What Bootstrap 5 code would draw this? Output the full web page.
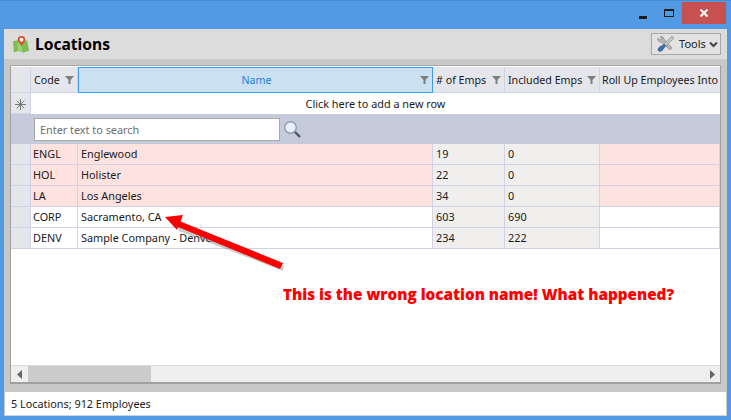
<!DOCTYPE html>
<html lang="en">
<head>
<meta charset="utf-8">
<title>Locations</title>
<link rel="stylesheet" href="https://cdn.jsdelivr.net/npm/bootstrap@5.3.0/dist/css/bootstrap.min.css">
<style>
html,body{height:420px;overflow:hidden}
body{background:#539ae4;font-family:"Noto Sans","Open Sans","Liberation Sans",sans-serif;font-size:10.85px;color:#1a1a1a;position:relative;border-top:1px solid #4a8cd0}
.titlebar{height:28px}
.winbtn{width:26px;height:22px;margin-top:1px}
.winclose{width:44px;background:#c75050;margin-right:5px}
.shell{height:387px;margin:0 4px 4px 4px;background:#c8c8c8}
.headbar{height:30px;background:#dcdcdc;padding:0 6px 0 8px}
.apptitle{font-size:15.6px;font-weight:700;color:#000;margin:0;line-height:20px}
.toolsbtn{width:70px;height:22px;border:1px solid #a8a8a8;background:#e2e2e2;border-radius:0;padding:0 2px 0 4px;font-size:11px;color:#222}
.gridwrap{flex:1 1 auto;min-height:0;padding:6px 6px 8px 6px;background:#c8c8c8}
.gridframe{height:100%;border:1px solid #a0a0a0;border-bottom-width:2px;border-top-color:#a8a8a8;background:#fff;padding-top:1px}
.gridbody{flex:1 1 auto;min-height:0;overflow:hidden}
.loctable{table-layout:fixed;width:709px;border-collapse:separate;border-spacing:0;margin:0}
.loctable td,.loctable th{height:21px;padding:0 0 0 3px;font-weight:400;border-right:1px solid #cfd3e4;border-bottom:1px solid #cfd3e4;white-space:nowrap;overflow:hidden;line-height:20px;vertical-align:middle}
.loctable thead th{height:26px;background:#e4e6ec;padding-left:3px;border-bottom-color:#d2d6e4;font-size:10.7px}
.loctable thead th .hd{display:flex;align-items:center;justify-content:space-between;padding-right:3px}
.loctable thead th.sel{background:#c9e1f1;border:1px solid #3f9bee;color:#1f7fdc;padding-left:0}
.loctable thead th.sel .hd span{flex:1;text-align:center;padding-left:14px}
.loctable thead th.last{padding-left:2px;border-right:0}
.indic{background:#e4e6ec!important;padding:0!important;text-align:center}
.newrow td{height:21px;background:#fff;border-right:0;border-bottom:0;text-align:center;padding:0}
.newrow td.indic{border-right:1px solid #cfd3e4;border-bottom:1px solid #cfd3e4}
.searchstrip td{height:30px;background:#c5cbdb;border:0;padding:0 0 0 23px}
.searchstrip td .searchin{width:246px;height:23px;border:1px solid #a8a8a8;background:#fff;padding:0 0 0 5px;color:#6d6d6d;line-height:21px;display:inline-block}
.searchstrip .srow{display:flex;align-items:center;gap:3px}
.warnrow td{background:#fde2df}
.loctable tbody td.calc{background:#f0efee}
.loctable tbody tr.datarow td:first-child{background:#e4e6ec}
.loctable tbody tr.datarow td:nth-child(2){padding-left:2px}
.filler{background:#fff}
.hscroll{height:17px;background:#eeeeee;border-top:1px solid #dadada}
.hscroll .arrowcell{width:17px}
.hthumb{width:123px;background:#cbcbcb}
.statusline{height:24px;background:#fff;margin:0 1px 0 1px;padding-left:6px;line-height:23px;border-bottom:1px solid #c8d4e4}
.overlay{position:absolute;left:0;top:-1px;width:731px;height:420px;pointer-events:none}
.callout{position:absolute;left:283px;top:284px;font-family:"Open Sans","Noto Sans",sans-serif;font-weight:800;font-size:15.25px;line-height:18px;color:#fe0000;white-space:nowrap}
</style>
</head>
<body>
<div class="titlebar d-flex justify-content-end align-items-start">
  <div class="winbtn d-flex align-items-center justify-content-center"><svg width="10" height="12" viewBox="0 0 10 12"><rect x="1" y="9" width="8" height="3" fill="#1c1c1c"/></svg></div>
  <div class="winbtn d-flex align-items-center justify-content-center"><svg width="12" height="10" viewBox="0 0 12 10"><rect x="1.5" y="1.5" width="9" height="7" fill="none" stroke="#1c1c1c"/><rect x="1" y="1" width="10" height="2" fill="#1c1c1c"/></svg></div>
  <div class="winbtn winclose d-flex align-items-center justify-content-center"><svg width="10" height="10" viewBox="0 0 10 10"><path d="M1.5 1.5l7 7M8.5 1.5l-7 7" stroke="#fff" stroke-width="2"/></svg></div>
</div>
<div class="shell d-flex flex-column">
  <div class="headbar d-flex align-items-center justify-content-between">
    <div class="d-flex align-items-center gap-1">
      <svg width="19" height="20" viewBox="0 0 20 20" class="flex-shrink-0"><path d="M1 7l5-1 4 2 6-2 2 11-6 2-5-2-5 2z" fill="#7fbd52"/><path d="M6 6l4 2 1 11-5-2z" fill="#9bd16e"/><path d="M13 8a4 4 0 1 0-8 .01C5 10.500 8 12 9 15c1-3 4-4.500 4-7z" transform="translate(1 -2.500)" fill="#d9512c"/><circle cx="10" cy="5.500" r="2" fill="#fff"/></svg>
      <h1 class="apptitle">Locations</h1>
    </div>
    <button type="button" class="toolsbtn d-flex align-items-center justify-content-between">
      <svg width="20" height="18" viewBox="0 0 20 18"><path d="M4 2c2-1 4 0 4 2l8 9-2 2-9-8C3 7 1 6 2 3l2 2 2-1z" fill="#b4b4b4" stroke="#777" stroke-width=".5"/><path d="M16 1l2 2-8 8-2-2z" fill="#c4c4c4" stroke="#777" stroke-width=".5"/><path d="M8 9l2 2-4 5c-1 1-3 1-4 0s0-3 1-4z" fill="#3d6ba8"/></svg>
      <span>Tools</span>
      <svg width="9" height="7" viewBox="0 0 9 7"><path d="M1 1.500l3.500 3.500L8 1.500" fill="none" stroke="#444" stroke-width="2"/></svg>
    </button>
  </div>
  <div class="gridwrap d-flex flex-column">
    <div class="gridframe d-flex flex-column">
      <div class="gridbody filler">
        <table class="loctable">
          <colgroup><col style="width:20px"><col style="width:47px"><col style="width:355px"><col style="width:72px"><col style="width:95px"><col style="width:120px"></colgroup>
          <thead>
            <tr>
              <th class="indic"></th>
              <th><div class="hd"><span>Code</span><svg width="9" height="8" viewBox="0 0 9 8"><path d="M0 0h9L5.500 4v4h-2V4z" fill="#7d7d7d"/></svg></div></th>
              <th class="sel"><div class="hd"><span>Name</span><svg width="9" height="8" viewBox="0 0 9 8"><path d="M0 0h9L5.500 4v4h-2V4z" fill="#7d7d7d"/></svg></div></th>
              <th><div class="hd"><span># of Emps</span><svg width="9" height="8" viewBox="0 0 9 8"><path d="M0 0h9L5.500 4v4h-2V4z" fill="#7d7d7d"/></svg></div></th>
              <th><div class="hd"><span>Included Emps</span><svg width="9" height="8" viewBox="0 0 9 8"><path d="M0 0h9L5.500 4v4h-2V4z" fill="#7d7d7d"/></svg></div></th>
              <th class="last">Roll Up Employees Into</th>
            </tr>
          </thead>
          <tbody>
            <tr class="newrow"><td class="indic"><svg width="11" height="11" viewBox="0 0 11 11"><path d="M5.500 0v11M0 5.500h11M1.700 1.700l7.600 7.600M9.300 1.700l-7.600 7.600" stroke="#777" stroke-width="1"/></svg></td><td colspan="5">Click here to add a new row</td></tr>
            <tr class="searchstrip"><td colspan="6"><div class="srow"><span class="searchin">Enter text to search</span><svg width="19" height="19" viewBox="0 0 19 19"><circle cx="7.500" cy="7.500" r="5.800" fill="#e8f1fb" stroke="#8d9cb0" stroke-width="1.400"/><path d="M12 12l5 5" stroke="#555" stroke-width="2.400"/></svg></div></td></tr>
            <tr class="datarow warnrow"><td></td><td>ENGL</td><td>Englewood</td><td class="calc">19</td><td class="calc">0</td><td></td></tr>
            <tr class="datarow warnrow"><td></td><td>HOL</td><td>Holister</td><td class="calc">22</td><td class="calc">0</td><td></td></tr>
            <tr class="datarow warnrow"><td></td><td>LA</td><td>Los Angeles</td><td class="calc">34</td><td class="calc">0</td><td></td></tr>
            <tr class="datarow"><td></td><td>CORP</td><td>Sacramento, CA</td><td class="calc">603</td><td class="calc">690</td><td></td></tr>
            <tr class="datarow"><td></td><td>DENV</td><td>Sample Company - Denver</td><td class="calc">234</td><td class="calc">222</td><td></td></tr>
          </tbody>
        </table>
      </div>
      <div class="hscroll d-flex">
        <div class="arrowcell d-flex align-items-center justify-content-center"><svg width="6" height="9" viewBox="0 0 6 9"><path d="M5 0v9L0 4.500z" fill="#666"/></svg></div>
        <div class="hthumb"></div>
        <div class="flex-grow-1"></div>
        <div class="arrowcell d-flex align-items-center justify-content-center"><svg width="6" height="9" viewBox="0 0 6 9"><path d="M1 0v9l5-4.500z" fill="#666"/></svg></div>
      </div>
    </div>
  </div>
  <div class="statusline">5 Locations; 912 Employees</div>
</div>
<svg class="overlay" viewBox="0 0 731 420" aria-hidden="true">
  <path d="M284 266L283 271 179 231 177 226z" fill="#777" opacity=".4"/>
  <path d="M165 217L183 215 180.500 221.500 283 263 280 269 178 227 177 230z" fill="#fb0000"/>
</svg>
<div class="callout">This is the wrong location name! What happened?</div>
<script src="https://cdn.jsdelivr.net/npm/bootstrap@5.3.0/dist/js/bootstrap.bundle.min.js"></script>
</body>
</html>
